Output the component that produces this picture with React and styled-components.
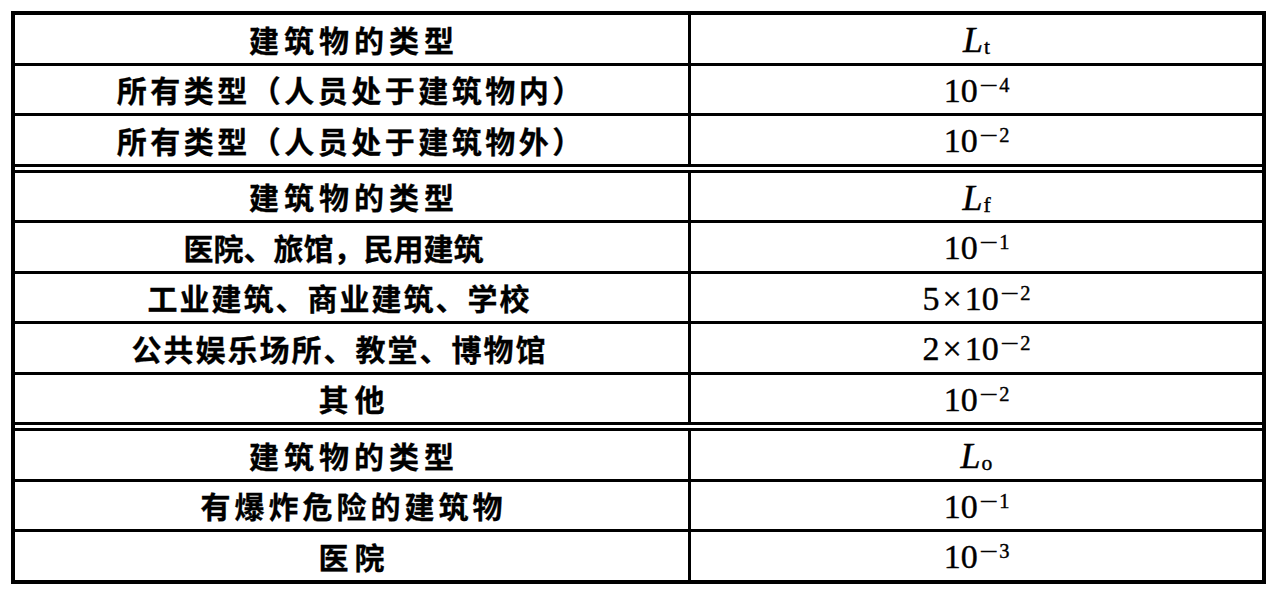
import React from "react";
import styled, { createGlobalStyle } from "styled-components";

const GlobalStyle = createGlobalStyle`
  html, body {
    margin: 0;
    padding: 0;
    background: #fff;
  }
  body {
    width: 1273px;
    height: 590px;
    overflow: hidden;
  }
`;

const Table = styled.div`
  margin: 11px 0 0 11px;
  width: 1247px;
  border: 4px solid #000;
  background: #fff;
`;

const Row = styled.div`
  display: grid;
  grid-template-columns: 676px 571px;
  border-top: ${(p) =>
    p.$first ? "none" : p.$double ? "9px double #000" : "3px solid #000"};
`;

const NameCell = styled.div`
  box-sizing: border-box;
  height: 47.5px;
  display: flex;
  align-items: center;
  justify-content: center;
  border-right: 3px solid #000;
  font-family: "Noto Sans CJK SC", "Noto Sans", sans-serif;
  font-weight: 700;
  font-size: 30px;
  line-height: 1;
  letter-spacing: ${(p) => p.$spacing}px;
  padding-left: ${(p) => p.$spacing}px;
  padding-right: ${(p) => p.$shift || 0}px;
  color: #000;
  white-space: nowrap;
  overflow: hidden;
  -webkit-text-stroke: 0.3px #000;
`;

const ValueCell = styled.div`
  box-sizing: border-box;
  height: 47.5px;
  display: flex;
  align-items: center;
  justify-content: center;
  padding-top: 3px;
  font-family: "Liberation Serif", "Times New Roman", serif;
  font-size: 34px;
  line-height: 1;
  color: #000;
  white-space: nowrap;
  overflow: hidden;
  -webkit-text-stroke: 0.4px #000;
`;

const Times = styled.span`
  margin: 0 3px;
`;

const Exp = styled.sup`
  font-size: 0.6em;
  position: relative;
  top: -0.28em;
  vertical-align: baseline;
  margin-left: 1px;
`;

const Minus = styled.span`
  display: inline-block;
  transform: scaleX(1.6);
  margin: 0 5px 0 4px;
`;

const Symbol = styled.span`
  font-style: italic;
  font-size: 36px;
`;

const Sub = styled.sub`
  font-style: normal;
  font-size: 0.6em;
  vertical-align: baseline;
  position: relative;
  top: 0.1em;
  margin-left: 1px;
`;

const sections = [
  {
    sub: "t",
    rows: [
      { name: "所有类型（人员处于建筑物内）", exp: "4", spacing: 3.5, shift: 4 },
      { name: "所有类型（人员处于建筑物外）", exp: "2", spacing: 3.5, shift: 4 },
    ],
  },
  {
    sub: "f",
    rows: [
      { name: "医院、旅馆，民用建筑", exp: "1", spacing: 0, shift: 36 },
      { name: "工业建筑、商业建筑、学校", exp: "2", factor: "5", spacing: 2, shift: 26 },
      { name: "公共娱乐场所、教堂、博物馆", exp: "2", factor: "2", spacing: 2, shift: 26 },
      { name: "其他", exp: "2", spacing: 6 },
    ],
  },
  {
    sub: "o",
    rows: [
      { name: "有爆炸危险的建筑物", exp: "1", spacing: 4 },
      { name: "医院", exp: "3", spacing: 6 },
    ],
  },
];

const Value = ({ factor, exp }) => (
  <>
    {factor && (
      <>
        {factor}
        <Times>×</Times>
      </>
    )}
    10
    <Exp>
      <Minus>−</Minus>
      {exp}
    </Exp>
  </>
);

export default function App() {
  return (
    <>
      <GlobalStyle />
      <Table>
        {sections.map((section, si) => (
          <React.Fragment key={section.sub}>
            <Row $first={si === 0} $double={si > 0}>
              <NameCell $spacing={5}>建筑物的类型</NameCell>
              <ValueCell>
                <Symbol>
                  L<Sub>{section.sub}</Sub>
                </Symbol>
              </ValueCell>
            </Row>
            {section.rows.map((row) => (
              <Row key={row.name}>
                <NameCell $spacing={row.spacing} $shift={row.shift}>
                  {row.name}
                </NameCell>
                <ValueCell>
                  <Value factor={row.factor} exp={row.exp} />
                </ValueCell>
              </Row>
            ))}
          </React.Fragment>
        ))}
      </Table>
    </>
  );
}
